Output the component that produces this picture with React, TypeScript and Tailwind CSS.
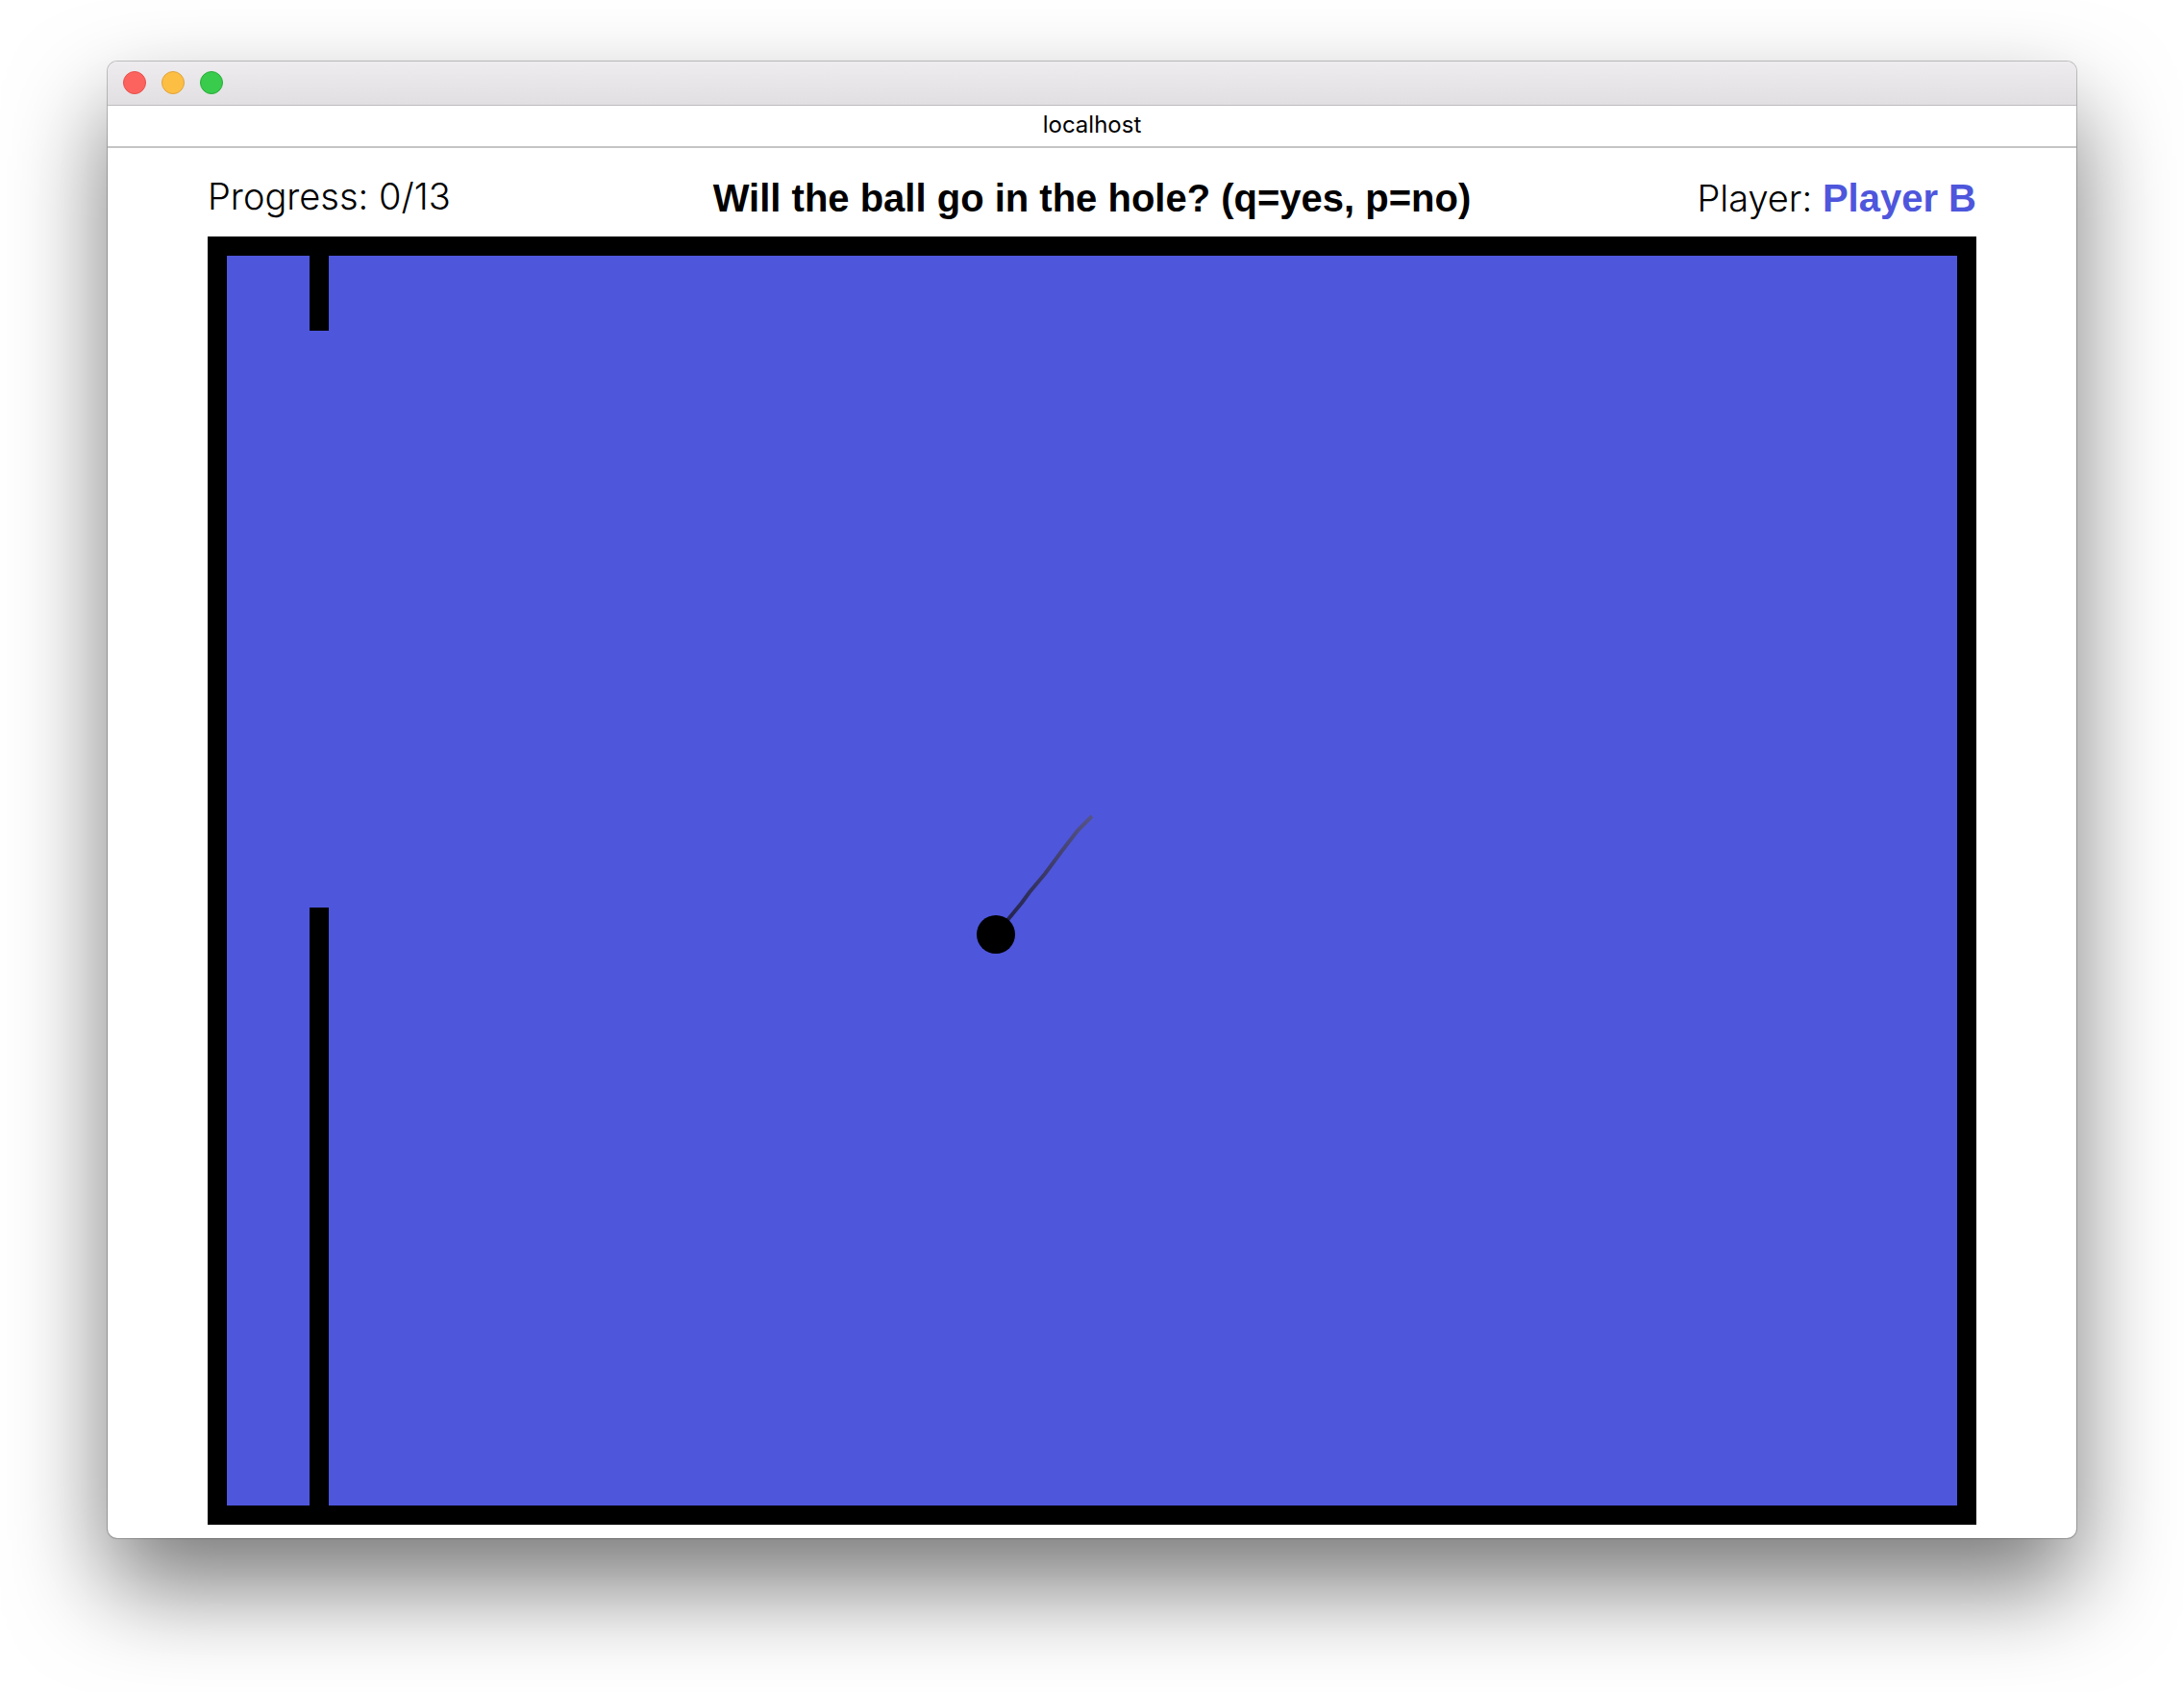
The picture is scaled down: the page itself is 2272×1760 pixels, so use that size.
function TrafficLights() {
  return (
    <div className="flex gap-4">
      <button type="button" aria-label="Close" className="size-6 rounded-full border border-[#e5504b] bg-[#fd635e]" />
      <button type="button" aria-label="Minimize" className="size-6 rounded-full border border-[#dfa23c] bg-[#fdbf43]" />
      <button type="button" aria-label="Zoom" className="size-6 rounded-full border border-[#2bac39] bg-[#38cb4c]" />
    </div>
  );
}

function Board() {
  return (
    <svg viewBox="0 0 1840 1340" className="block w-full" role="img" aria-label="Ball moving toward the hole">
      <defs>
        <linearGradient id="trail" gradientUnits="userSpaceOnUse" x1="832" y1="710" x2="920" y2="602">
          <stop offset="0" stopColor="#24244f" />
          <stop offset="1" stopColor="#565488" />
        </linearGradient>
      </defs>
      <rect width="1840" height="1340" fill="#000" />
      <rect x="20" y="20" width="1800" height="1300" fill="#4e56dc" />
      <rect x="106" y="20" width="20" height="78" fill="#000" />
      <rect x="106" y="698" width="20" height="622" fill="#000" />
      <path
        d="M820 726L833 710L847 693L855 682L871 663L888 640L905 618L920 603"
        fill="none"
        stroke="url(#trail)"
        strokeWidth="4"
        strokeLinejoin="round"
      />
      <circle cx="820" cy="726" r="20" fill="#000" />
    </svg>
  );
}

export default function App() {
  return (
    <div className="min-h-screen bg-white px-28 pt-16 pb-40 text-black">
      <main className="overflow-hidden rounded-[10px] bg-white shadow-[0_0_0_1px_rgba(0,0,0,0.22),0_50px_100px_rgba(0,0,0,0.53)]">
        <div className="h-[46px] border-b border-[#bdbbbd] bg-linear-to-b from-[#eeecef] to-[#e1dfe2] px-4 pt-[10px]">
          <TrafficLights />
        </div>
        <div className="flex h-11 items-center justify-center border-b-2 border-[#c4c4c4] pb-0.5 font-['Inter'] text-2xl">
          localhost
        </div>
        <div className="px-[104px] pt-6 pb-[14px]">
          <header className="grid grid-cols-[1fr_auto_1fr] pb-3 text-[40px] leading-[56px]">
            <p className="font-['Inter'] text-[38px] leading-[52px] font-light">Progress: 0/13</p>
            <h1 className="font-['Liberation_Sans'] font-bold">Will the ball go in the hole? (q=yes, p=no)</h1>
            <p className="text-right font-['Liberation_Sans']">
              <span className="font-['Inter'] text-[38px] font-light">Player: </span>
              <b className="font-bold text-[#4e56dc]">Player B</b>
            </p>
          </header>
          <Board />
        </div>
      </main>
    </div>
  );
}
